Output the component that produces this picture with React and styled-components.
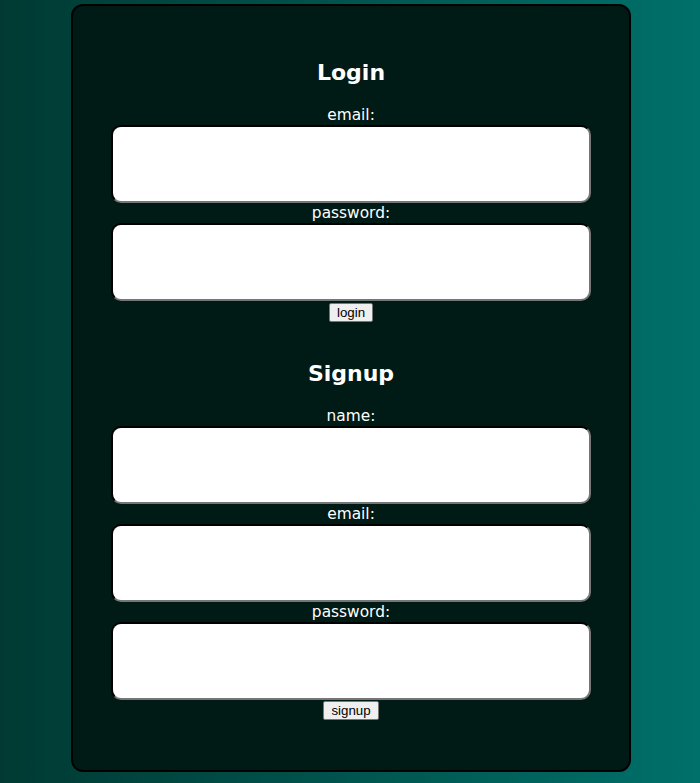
import React from "react";
import styled, { createGlobalStyle } from "styled-components";

const Global = createGlobalStyle`
  html, body { margin: 0; padding: 0; }
  body {
    min-height: 100vh;
    background: linear-gradient(to right, #003a33, #00706a);
    font-family: "DejaVu Sans", "Open Sans", sans-serif;
  }
`;

const Page = styled.main`
  display: flex;
  justify-content: center;
  padding: 4px 0 11px 2px;
`;

const Card = styled.section`
  box-sizing: border-box;
  width: 560px;
  background: #001a16;
  border: 2px solid #000;
  border-radius: 12px;
  padding: 32px 38px 33px;
  color: #fff;
`;

const Form = styled.form`
  display: flex;
  flex-direction: column;
  align-items: center;
  margin-bottom: 17px;
`;

const Heading = styled.h2`
  margin: 20px 0 17px;
  font-size: 22px;
  line-height: 30px;
  font-weight: bold;
`;

const Label = styled.label`
  display: block;
  height: 20px;
  font-size: 15.4px;
  line-height: 20px;
  text-align: center;
`;

const Input = styled.input`
  box-sizing: border-box;
  display: block;
  flex: none;
  width: 100%;
  height: 78px;
  margin: 0;
  border: 2px inset #767676;
  border-top-color: #1c1c1c;
  border-left-color: #1c1c1c;
  border-radius: 10px;
  background: #fff;
  padding: 0 8px;
  font-size: 16px;
`;

const Button = styled.button`
  margin-top: ${(p) => p.$gap}px;
  font-family: "Liberation Sans", Arial, sans-serif;
  font-size: 13.3px;
  line-height: 15px;
  padding: 1px 7px;
  background: #efefef;
  color: #000;
  border: 1px solid #767676;
  border-radius: 2px;
`;

const fields = {
  login: ["email", "password"],
  signup: ["name", "email", "password"],
};

function AuthForm({ title, items, action, gap }) {
  return (
    <Form onSubmit={(e) => e.preventDefault()}>
      <Heading>{title}</Heading>
      {items.map((f) => (
        <React.Fragment key={f}>
          <Label htmlFor={`${action}-${f}`}>{f}:</Label>
          <Input id={`${action}-${f}`} type={f === "password" ? "password" : "text"} />
        </React.Fragment>
      ))}
      <Button type="submit" $gap={gap}>{action}</Button>
    </Form>
  );
}

export default function App() {
  return (
    <>
      <Global />
      <Page>
        <Card>
          <AuthForm title="Login" items={fields.login} action="login" gap={2} />
          <AuthForm title="Signup" items={fields.signup} action="signup" gap={1} />
        </Card>
      </Page>
    </>
  );
}
